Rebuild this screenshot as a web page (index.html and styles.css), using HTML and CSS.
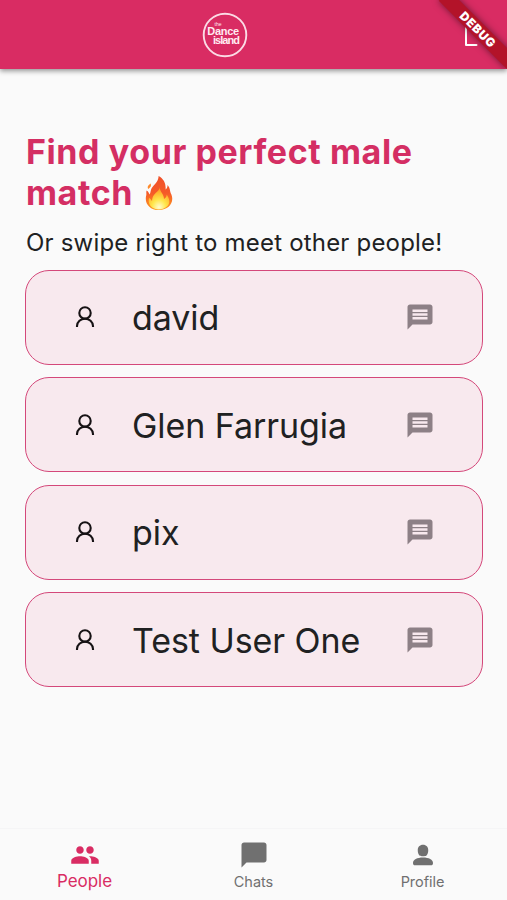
FILE: index.html
```html
<!DOCTYPE html>
<html lang="en">
<head>
<meta charset="utf-8">
<title>Dance island</title>
<link rel="stylesheet" href="styles.css">
</head>
<body>
<svg class="defs" width="0" height="0" aria-hidden="true">
  <symbol id="person" viewBox="0 0 24 26">
    <circle cx="12" cy="8.900" r="5.700" /><path d="M4 23v-1C4.200 17.800 7.600 14.800 12 14.800s7.800 3 8 7.200v1" />
  </symbol>
  <symbol id="message" viewBox="0 0 24 24">
    <path d="M20 2H4c-1.1 0-1.99.9-1.99 2L2 22l4-4h14c1.1 0 2-.9 2-2V4c0-1.1-.9-2-2-2zm-2 12H6v-2h12v2zm0-3H6V9h12v2zm0-3H6V6h12v2z"/>
  </symbol>
</svg>
<div class="app">
  <header class="bar">
    <svg class="logo" viewBox="0 0 46 46">
      <circle cx="23" cy="23" r="21.3" />
      <text class="tiny" x="12.5" y="13.600">the</text>
      <text x="5.200" y="22.800" textLength="32">Dance</text>
      <text x="11" y="32.400" textLength="27">island</text>
    </svg>
    <svg class="logout" viewBox="0 0 24 24"><path d="M10 2H3v18h10.500" /></svg>
    <div class="debug">DEBUG</div>
  </header>
  <main class="content">
    <h1>Find your perfect male<br>match <svg class="fire" viewBox="0 0 30 36">
      <defs>
        <linearGradient id="flame" x1="0" y1="0" x2="0" y2="1"><stop offset="0" stop-color="#f0502a"/><stop offset=".5" stop-color="#f55a28"/><stop offset="1" stop-color="#ff9a1f"/></linearGradient>
        <radialGradient id="core" cx=".5" cy=".9" r=".85"><stop offset="0" stop-color="#fffbd0"/><stop offset=".4" stop-color="#ffe64a"/><stop offset="1" stop-color="#ff961e"/></radialGradient>
      </defs>
      <path fill="url(#flame)" d="M14.6 1C20 4 22 8.500 21.600 14.500C23 13.500 23.600 12 23.500 10C26.500 13 25.500 16 27.400 19.500C30.500 27 25 35 15 35C5.500 35 .2 28 2.200 20.500C2.600 18.500 2 17.500 2.600 15.500C4.300 16.500 4.800 18 5.700 19.500C7 17 6.200 15 8.500 12C12 8 14.500 5.500 14.600 1z"/>
      <path fill="#ff8a2b" d="M6.700 8.500C7.500 11 6.500 12.500 4.300 14C2.700 11.800 4.500 10 6.700 8.500z"/>
      <path fill="url(#core)" d="M15.500 12C16 17 20 19 20 24C22 23 22.800 21 22.700 19.500C25.500 24 26.800 28 23 31.500C18.500 35.500 10 35.500 6.500 31C4.300 28 4.500 25 5 23C6.500 23.600 7 25 8 26C8.500 22 9 21 11 18.800C13.500 16 15.700 15 15.500 12z"/>
    </svg></h1>
    <p class="lead">Or swipe right to meet other people!</p>
    <ul class="list">
      <li class="card"><svg class="person"><use href="#person"/></svg><span class="name">david</span><svg class="message"><use href="#message"/></svg></li>
      <li class="card"><svg class="person"><use href="#person"/></svg><span class="name">Glen Farrugia</span><svg class="message"><use href="#message"/></svg></li>
      <li class="card"><svg class="person"><use href="#person"/></svg><span class="name">pix</span><svg class="message"><use href="#message"/></svg></li>
      <li class="card"><svg class="person"><use href="#person"/></svg><span class="name">Test User One</span><svg class="message"><use href="#message"/></svg></li>
    </ul>
  </main>
  <nav class="tabs">
    <a class="tab active"><svg viewBox="0 0 24 24"><path d="M16 11c1.660 0 2.990-1.340 2.990-3S17.660 5 16 5s-3 1.340-3 3 1.340 3 3 3zm-8 0c1.660 0 2.990-1.340 2.990-3S9.660 5 8 5 5 6.340 5 8s1.340 3 3 3zm0 2c-2.330 0-7 1.170-7 3.500V19h14v-2.500c0-2.330-4.670-3.500-7-3.500zm8 0c-.29 0-.62.020-.97.050 1.160.840 1.970 1.970 1.970 3.450V19h6v-2.500c0-2.330-4.670-3.500-7-3.500z"/></svg><span>People</span></a>
    <a class="tab"><svg viewBox="0 0 24 24"><path d="M20 2H4c-1.100 0-2 .9-2 2v18l4-4h14c1.100 0 2-.9 2-2V4c0-1.100-.9-2-2-2z"/></svg><span>Chats</span></a>
    <a class="tab"><svg viewBox="0 0 24 24"><path d="M12 3.800c2.600 0 4.200 1.900 4.200 4.300 0 1.900-.6 3.400-1.600 4.500-.5.500-4.700.5-5.200 0-1-1.100-1.600-2.600-1.600-4.500 0-2.400 1.600-4.300 4.200-4.300zM12 13.900c4.700 0 8 1.700 8 4.400 0 1.300-.5 1.900-1.700 1.900H5.700c-1.200 0-1.700-.6-1.700-1.900 0-2.700 3.300-4.400 8-4.400z"/></svg><span>Profile</span></a>
  </nav>
</div>
</body>
</html>
```
FILE: styles.css
```css
* { box-sizing: border-box; }
body { margin: 0; background: #fafafa; font-family: Inter, "Liberation Sans", sans-serif; color: #202122; }
.defs { position: absolute; }
.app { display: flex; flex-direction: column; height: 900px; overflow: hidden; }
.bar {
  position: relative; flex: none; height: 69px; overflow: hidden;
  display: grid; grid-template-columns: 1fr 46px 1fr; align-items: center;
  background: #d92c63;
}
.app::before { content: ""; position: absolute; top: 0; left: 0; width: 100%; height: 69px; box-shadow: 0 2px 5px rgba(0, 0, 0, .42); }
.logo { grid-column: 2; width: 46px; height: 46px; margin-left: -29px; }
.logo circle { fill: none; stroke: #fbdbe5; stroke-width: 1.9; }
.logo text { fill: #ffeaf0; font: 700 11px "Liberation Sans", sans-serif; }
.logo .tiny { font-size: 5px; font-weight: 400; }
.logout { justify-self: end; width: 24px; height: 24px; margin: 4px 20px 0 0; fill: none; stroke: #fff; stroke-width: 2; stroke-linecap: round; stroke-linejoin: round; }
.debug {
  position: absolute; right: -19px; top: 22px; width: 96px; height: 15px;
  transform: rotate(45deg); background: #b31329; color: #fff;
  box-shadow: 0 0 7px rgba(0, 0, 0, .5);
  font-size: 12px; line-height: 15px; font-weight: 900; text-align: center; letter-spacing: .7px;
}
.content { flex: 1; padding: 62px 24.500px 0 25px; }
h1 { margin: 0; padding-left: 1px; color: #d42e63; font-size: 34px; line-height: 41px; font-weight: 700; letter-spacing: .59px; white-space: nowrap; }
.fire { width: 30px; height: 36px; margin-left: 2px; vertical-align: -6px; }
.lead { margin: 14px 0 11.500px 1px; font-size: 24px; line-height: 31px; letter-spacing: .19px; white-space: nowrap; }
.list { list-style: none; margin: 0; padding: 0; display: grid; gap: 12.500px; }
.card {
  height: 95px; display: flex; align-items: center; padding: 0 47px 0 47px;
  border: 1.400px solid #d4487a; border-radius: 24px; background: #f8e9ee;
}
.person { width: 24px; height: 26px; fill: none; stroke: #161214; stroke-width: 2.100; }
.name { flex: 1; margin-left: 35px; font-size: 34px; line-height: 42px; letter-spacing: -.07px; padding-top: 2px; }
.message { width: 30px; height: 30px; fill: #8d8086; }
.tabs { flex: none; height: 72px; display: grid; grid-template-columns: 1fr 1fr 1fr; border-top: 1px solid #f5f5f6; }
.tab { display: flex; flex-direction: column; align-items: center; padding-top: 11px; color: #707070; font-size: 14.500px; line-height: 20px; }
.tab svg { width: 30px; height: 30px; fill: currentColor; }
.tab span { margin-top: 2px; letter-spacing: -.05px; }
.active { color: #d92c63; font-size: 17px; }
.active span { margin-top: 1px; }
```
